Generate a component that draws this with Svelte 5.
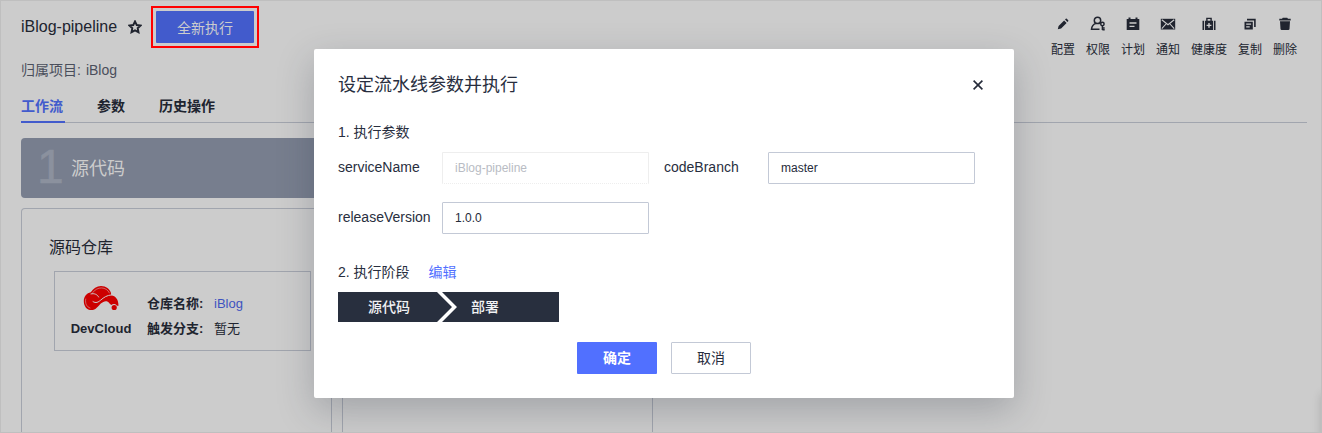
<script>
  const tabs = ['工作流', '参数', '历史操作'];
  const actions = [
    { id: 'edit', label: '配置' },
    { id: 'auth', label: '权限' },
    { id: 'plan', label: '计划' },
    { id: 'mail', label: '通知' },
    { id: 'health', label: '健康度' },
    { id: 'copy', label: '复制' },
    { id: 'trash', label: '删除' }
  ];
  const params = [
    { name: 'serviceName', value: 'iBlog-pipeline', disabled: true },
    { name: 'codeBranch', value: 'master' },
    { name: 'releaseVersion', value: '1.0.0' }
  ];
</script>

<div class="page">
  <header>
    <div class="heading">
      <h1>iBlog-pipeline</h1>
      <svg class="star" width="14" height="14" viewBox="0 0 14 14"><path d="M7 1.4 8.700 5l4 .5-3 2.700.8 4L7 10.300l-3.500 1.900.8-4-3-2.700 4-.5Z" /></svg>
      <div class="highlight"><button class="run">全新执行</button></div>
    </div>
    <nav class="actions">
      {#each actions as a}
        <div class="action">
          <svg width="16" height="16" viewBox="0 0 16 16">
            {#if a.id === 'edit'}
              <path d="M2.800 13.200 3.600 10l5.500-5.500 2.500 2.500L6.100 12.500Zm7.200-9.600.8-.8q.5-.5 1 0l1.400 1.400q.5.500 0 1l-.8.8Z" />
            {:else if a.id === 'auth'}
              <g class="line"><circle cx="7.500" cy="4.400" r="3.200" /><path d="M5.800 7.400Q1.900 9 1.500 13.300H9.500M9.500 7.200l.8.500" /><circle cx="12.400" cy="8" r="1.700" /><path d="M12.400 9.700v4.300m0-2h2.300m-2.300 1.700h2.300" /></g>
            {:else if a.id === 'plan'}
              <path fill-rule="evenodd" d="M3.500 1.500h2V3h5V1.500h2V3h1.800v11H1.700V3h1.800ZM4.500 6.300v1.400h7V6.300Zm0 3.400v1.400h5V9.700Z" />
            {:else if a.id === 'mail'}
              <path d="M.8 2.800h14.400v10.700H.8Z" /><path class="cut" d="m1.800 3.700 6.200 5 6.200-5M1.800 12.600l4.200-4.600m8.200 4.600L10 8" />
            {:else if a.id === 'health'}
              <path fill-rule="evenodd" d="M1.500 4.800h1.600V14H1.500Zm11.400 0h1.600V14h-1.600ZM4 4.800h1.200V1.700h5.600v3.100H12V14H4Zm2.600-1.700v1.700h2.800V3.100ZM7.300 7v1.700H5.600V10h1.700v1.800h1.400V10h1.700V8.700H8.700V7Z" />
            {:else if a.id === 'copy'}
              <path fill-rule="evenodd" d="M2.500 5.700h8.300v7.800H2.500Zm1.700 1.800v1.200h4.900V7.500Zm0 2.700v1.200h3.500v-1.200Z" /><path d="M5 2.800h8.700V11h-1.600V4.500H5Z" />
            {:else}
              <path d="M5.800 1.800h4.400l.8 1h2.700v1.700H2.300V2.800H5ZM3 5.300h10l-.5 7.600q-.1 1.100-1.200 1.100H4.700q-1.100 0-1.200-1.100Z" />
            {/if}
          </svg>
          <span>{a.label}</span>
        </div>
      {/each}
    </nav>
  </header>

  <div class="project"><span>归属项目:</span><span>iBlog</span></div>
  <nav class="tabs">
    {#each tabs as tab, i}<span class:active={i === 0}>{tab}</span>{/each}
  </nav>

  <main>
    <section class="stage">
      <div class="stage-head"><span class="num">1</span><span class="stage-name">源代码</span></div>
      <div class="stage-body">
        <h2>源码仓库</h2>
        <div class="repo">
          <div class="brand">
            <svg width="36" height="26" viewBox="0 0 36 26">
              <path class="red" d="M.8 16.200c0-4.700 2.900-8 7-8.900C10.200 3.300 13.800 1 18 1c5.200 0 8.700 2.900 10 7l.2 2.300c4.500.8 7.300 4.200 7.300 10.400h-1.600a3.400 3.400 0 0 0-5.500-.7q-1.500-.5-2.600-2.400c-2.300-2.500-5.300-1.400-8 .9-3.300 3.400-5.300 6.700-9.400 6.600C4 25 .8 21.500.8 16.200Z" />
              <circle class="red" cx="31.200" cy="22.500" r="2.600" />
              <path class="groove" d="M8 8.900c3.200-.8 6.300.4 7.600 3.100M28.500 9.900c-4.700.3-7.700 2.600-10.700 5.100-2.600 2.200-4.800 3.600-7.800 1.600" />
              <path class="groove fine" d="M9.700 7.600c4.500-6.500 13.600-6.200 16.700.3M2.700 14c-.8 4.600 1.100 8 4.300 9" />
            </svg>
            <b>DevCloud</b>
          </div>
          <dl>
            <dt>仓库名称:</dt><dd class="link">iBlog</dd>
            <dt>触发分支:</dt><dd>暂无</dd>
          </dl>
        </div>
      </div>
    </section>
    <section class="stage">
      <div class="stage-head"></div>
      <div class="stage-body"></div>
    </section>
  </main>
  <div class="edge-shade"></div>

  <div class="modal" role="dialog">
    <div class="modal-head">
      <h3>设定流水线参数并执行</h3>
      <svg width="10" height="10" viewBox="0 0 10 10"><path d="m.6.600 8.800 8.800m0-8.800L.6 9.400" /></svg>
    </div>
    <div class="caption">1. 执行参数</div>
    <div class="params">
      {#each params as p}
        <label for={p.name}>{p.name}</label>
        <input id={p.name} value={p.value} disabled={p.disabled} />
      {/each}
    </div>
    <div class="caption second">2. 执行阶段<a>编辑</a></div>
    <div class="steps">
      <span class="step-one">源代码</span>
      <svg width="20" height="30" viewBox="0 0 20 30"><path d="M0 0h5l15 15L5 30H0l15-15Z" /></svg>
      <span class="step-two">部署</span>
    </div>
    <div class="buttons"><button class="ok">确定</button><button class="cancel">取消</button></div>
  </div>
</div>

<style>
  :global(body) { margin: 0; }
  * { box-sizing: border-box; }
  .page {
    position: relative; width: 1322px; height: 433px; overflow: hidden;
    display: flex; flex-direction: column; padding: 5px 14px 0 20px;
    border: 1px solid #bfbfbf; background: #ccc; color: #20242f;
    font-family: "Liberation Sans", "Noto Sans CJK SC", sans-serif; font-size: 14px;
  }
  h1, h2, h3, dl, dd { margin: 0; font-weight: 400; }
  button { font-family: inherit; font-size: 14px; padding: 0 0 2px; border-radius: 1px; }
  header { display: flex; justify-content: space-between; height: 50px; flex: none; }
  .heading { display: flex; align-items: center; height: 42px; }
  h1 { font-size: 16px; line-height: 24px; width: 96px; white-space: nowrap; }
  .star { margin: 0 9px 0 11px; }
  .star path { fill: none; stroke: #20242f; stroke-width: 1.9; }
  .highlight { border: 2px solid #f00; padding: 3px; width: 108px; height: 42px; }
  .run { width: 98px; height: 32px; display: block; border: 0; padding: 0; background: #425bcc; color: #ccc; }
  .actions { display: flex; gap: 11px; padding: 10px 10px 0 0; }
  .action { display: flex; flex-direction: column; align-items: center; font-size: 12px; line-height: 18px; }
  .action svg { margin-bottom: 9px; fill: #20242f; flex: none; }
  .line { fill: none; stroke: #20242f; stroke-width: 1.5; }
  .cut { fill: none; stroke: #ccc; stroke-width: 1.1; }
  .project { display: flex; gap: 5px; height: 28px; line-height: 28px; color: #4a4e5b; flex: none; }
  .tabs { display: flex; gap: 34px; height: 39px; flex: none; border-bottom: 1px solid #a1a5ae; font-weight: 700; }
  .tabs span { line-height: 44px; height: 39px; }
  .tabs .active { color: #425bcc; border-bottom: 2px solid #425bcc; width: 44px; margin-right: -2px; }
  main { display: flex; gap: 10px; padding-top: 15px; flex: 1; min-height: 0; }
  .stage { width: 311px; display: flex; flex-direction: column; }
  .stage-head { height: 60px; flex: none; background: #777e8e; border-radius: 4px; display: flex; align-items: center; color: #ccc; font-size: 18px; padding-left: 16px; }
  .num { font-size: 48px; color: #8b919e; width: 34px; line-height: 60px; margin-top: -2px; -webkit-text-stroke: .6px #8b919e; }
  .stage-name { margin-top: -3px; }
  .stage-body { margin-top: 10px; flex: 1; border: 1px solid #a1a5ae; border-bottom: 0; border-radius: 4px 4px 0 0; padding: 26px 20px 0 27px; }
  h2 { font-size: 16px; line-height: 26px; }
  .repo { margin: 10px 0 0 5px; width: 257px; height: 80px; border: 1px solid #a1a5ae; display: flex; font-size: 13px; }
  .brand { width: 92px; padding-top: 13px; display: flex; flex-direction: column; align-items: center; }
  .brand b { line-height: 18px; margin-top: 9px; }
  .brand svg { flex: none; }
  .red { fill: #c00; }
  .groove { fill: none; stroke: #ccc; stroke-width: 1; stroke-linecap: round; }
  .fine { stroke-width: .5; }
  dl { display: grid; grid-template-columns: 67px auto; grid-auto-rows: 25px; line-height: 25px; padding-top: 19px; align-content: start; }
  dt { font-weight: 700; }
  .link { color: #3d53c0; }
  .edge-shade { position: absolute; right: -12px; top: 393px; width: 12px; height: 60px; box-shadow: 0 0 10px rgba(0, 0, 0, .15); }

  .modal {
    position: absolute; left: 313px; top: 48px; width: 700px; height: 349px;
    background: #fff; border-radius: 2px; padding: 24px 24px 0; color: #282e3e;
    box-shadow: 0 12px 36px rgba(37, 43, 58, .25);
  }
  .modal-head { display: flex; justify-content: space-between; align-items: center; height: 24px; padding-right: 7px; }
  .modal-head svg path { fill: none; stroke: #252b3a; stroke-width: 1.600; }
  h3 { font-size: 18px; line-height: 24px; }
  .caption { line-height: 20px; margin-top: 25px; }
  .params { display: grid; grid-template-columns: 104px 207px 119px 207px; row-gap: 18px; margin-top: 10px; grid-auto-rows: 32px; }
  .params label { line-height: 31px; }
  .params label:nth-of-type(2) { padding-left: 15px; }
  input { width: 207px; height: 32px; border: 1px solid #c3c9d6; padding: 0 12px; font: 12px "Liberation Sans", sans-serif; color: #252b3a; background: #fff; border-radius: 1px; }
  input:disabled { border-color: #eee; border-bottom-style: dotted; color: #b9bcc4; }
  .second { margin-top: 28px; }
  .second a { color: #5170ff; margin-left: 19px; }
  .steps { width: 221px; height: 30px; margin-top: 10px; background: #282f3e; color: #f1f2f4; display: flex; line-height: 30px; font-weight: 500; }
  .step-one { width: 99px; padding-left: 30px; }
  .steps svg { fill: #fff; }
  .step-two { padding-left: 14px; }
  .buttons { display: flex; gap: 14px; margin: 20px 0 0 239px; }
  .buttons button { width: 80px; height: 32px; }
  .ok { border: 0; background: #5170ff; color: #fff; font-weight: 700; }
  .cancel { border: 1px solid #c3c9d6; background: #fff; color: #282e3e; }
</style>
